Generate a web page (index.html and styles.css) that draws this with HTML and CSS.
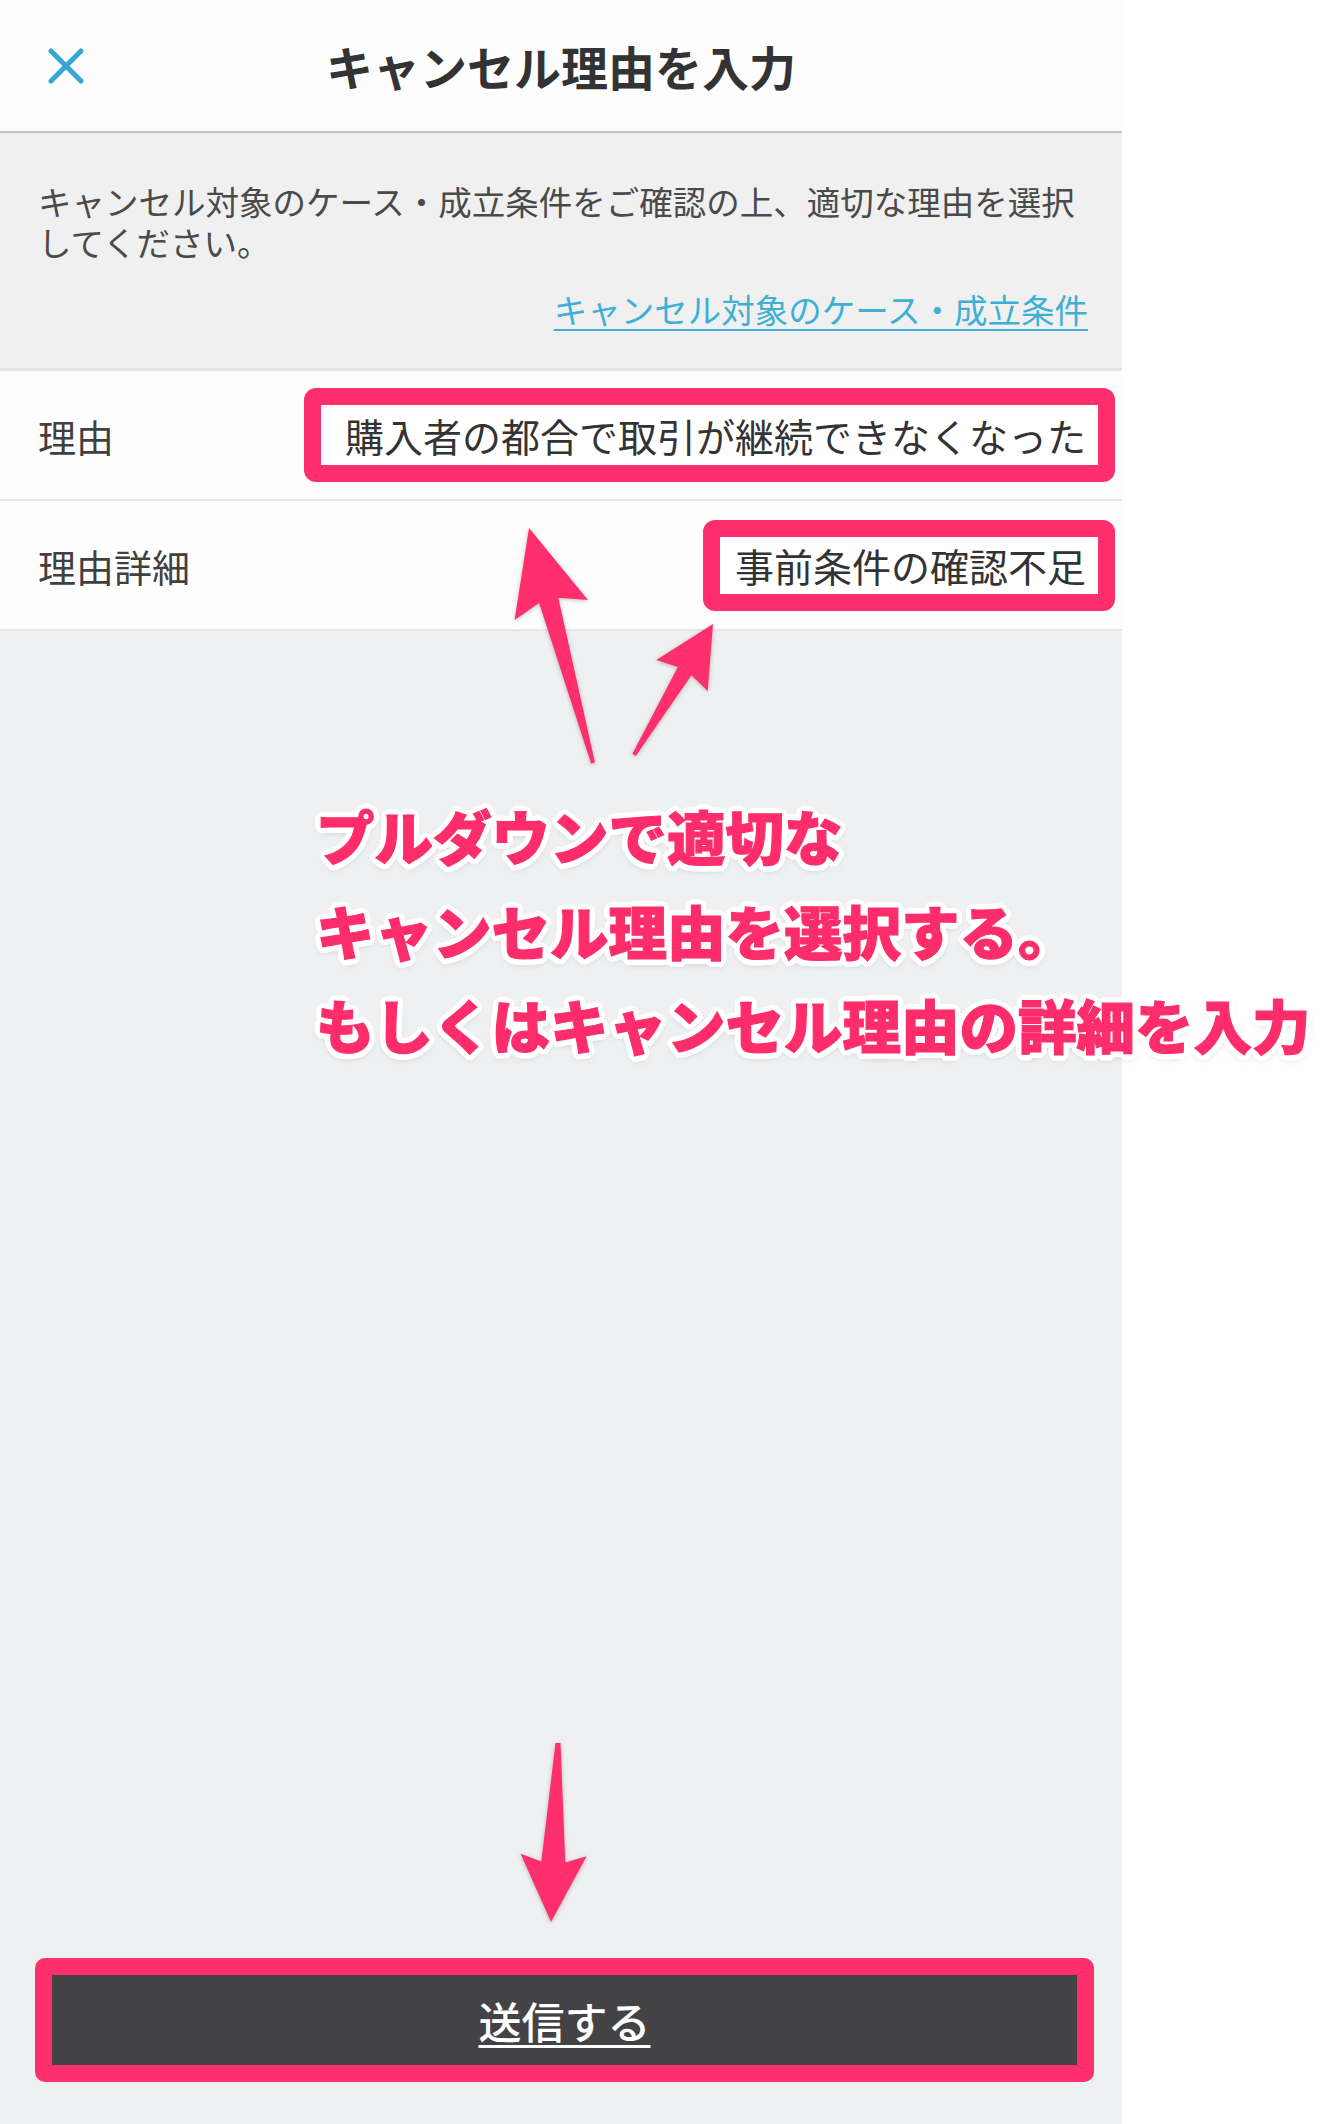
FILE: index.html
```html
<!DOCTYPE html>
<html lang="ja">
<head>
  <meta charset="UTF-8" />
  <meta name="viewport" content="width=device-width, initial-scale=1.0"/>
  <title>キャンセル理由を入力</title>
  <link rel="stylesheet" href="styles.css">
</head>
<body>
  <div class="screen">
    <!-- Top bar -->
    <header class="topbar">
      <button class="close" aria-label="閉じる">
        <svg width="36" height="36" viewBox="0 0 36 36">
          <path d="M3 3 L33 33 M33 3 L3 33" stroke="#35a7d7" stroke-width="5" stroke-linecap="round" fill="none"/>
        </svg>
      </button>
      <h1>キャンセル理由を入力</h1>
      <span></span>
    </header>

    <!-- Notice -->
    <section class="notice">
      <p>キャンセル対象のケース・成立条件をご確認の上、適切な理由を選択してください。</p>
      <a class="notice-link" href="#">キャンセル対象のケース・成立条件</a>
    </section>

    <!-- Fields -->
    <ul class="fields">
      <li class="field">
        <span class="field-label">理由</span>
        <span class="field-value mark mark-reason">購入者の都合で取引が継続できなくなった</span>
      </li>
      <li class="field">
        <span class="field-label">理由詳細</span>
        <span class="field-value mark mark-detail">事前条件の確認不足</span>
      </li>
    </ul>

    <div class="spacer"></div>

    <div class="submit-area">
      <div class="mark mark-button">
        <button class="submit" type="button">送信する</button>
      </div>
    </div>

    <!-- Annotation layer -->
    <svg class="arrows" width="1343" height="2124" viewBox="0 0 1343 2124">
      <polygon points="529,528 588,600 558.3,597.8 594.9,762.5 591.1,763.5 539.1,603 514.6,620"/>
      <polygon points="713,624 707.7,690.9 691.4,675.2 635.7,756 632.3,754 677.8,667 656.3,659.9"/>
      <polygon points="551,1922 586.6,1856.3 565.3,1862.5 560.5,1743.1 555.5,1742.9 541.3,1861.5 520.6,1853.7"/>
    </svg>
    <p class="callout">プルダウンで適切な<br>キャンセル理由を選択する。<br>もしくはキャンセル理由の詳細を入力</p>
  </div>
</body>
</html>
```

FILE: styles.css
```css
* {
  margin: 0;
  padding: 0;
  box-sizing: border-box;
}

body {
  font-family: "Noto Sans CJK JP", "Noto Sans", sans-serif;
  background: #fff;
  color: #333;
  overflow: hidden;
}

.screen {
  position: relative;
  width: 1122px;
  min-height: 100vh;
  background: #eff0f2;
  display: flex;
  flex-direction: column;
}

/* top bar */
.topbar {
  height: 133px;
  background: #fdfdfd;
  border-bottom: 2px solid #c3c3c5;
  display: grid;
  grid-template-columns: 1fr auto 1fr;
  align-items: center;
}

.close {
  justify-self: start;
  margin-left: 48px;
  background: none;
  border: none;
  width: 36px;
  height: 36px;
  display: flex;
}

.topbar h1 {
  font-size: 47px;
  font-weight: 700;
  color: #333;
  line-height: 1;
}

/* notice */
.notice {
  padding: 47px 34px 39px 38px;
  border-bottom: 3px solid #e5e5e7;
  background: #f0f0f1;
}

.notice p {
  font-size: 33.5px;
  line-height: 41px;
  color: #4a4a4a;
}

.notice-link {
  display: block;
  margin-top: 26px;
  text-align: right;
  font-size: 33.5px;
  line-height: 41px;
  color: #3fb0d4;
  text-decoration: underline;
  text-decoration-thickness: 2px;
  text-underline-offset: 6px;
}

/* fields */
.fields {
  list-style: none;
}

.field {
  height: 130px;
  display: flex;
  align-items: center;
  justify-content: space-between;
  padding: 0 34px 0 38px;
  background: #fdfdfd;
  border-bottom: 2px solid #e7e7e9;
}

.field-label {
  font-size: 38px;
  color: #404040;
}

.field-value {
  font-size: 39px;
  color: #333;
  white-space: nowrap;
}

/* pink highlight boxes */
.mark {
  border: 17px solid #ff2e6c;
  border-radius: 12px;
  background: #fff;
}

.mark-reason {
  line-height: 60px;
  padding: 0 12px 0 24px;
  margin-right: -27px;
}

.mark-detail {
  line-height: 57px;
  padding: 0 12px 0 15px;
  margin-right: -27px;
}

.spacer {
  flex: 1;
}

.submit-area {
  padding: 0 28px 42px 35px;
}

.mark-button {
  border-radius: 10px;
  background: #434345;
}

.submit {
  display: block;
  width: 100%;
  height: 90px;
  border: none;
  background: #434345;
  color: #fff;
  font: inherit;
  font-size: 43px;
  font-weight: 500;
  text-decoration: underline;
  text-decoration-thickness: 3px;
  text-underline-offset: 6px;
}

/* annotations */
.arrows {
  position: absolute;
  left: 0;
  top: 0;
  pointer-events: none;
  overflow: visible;
  fill: #ff2e6c;
  filter: drop-shadow(0 1px 2px rgba(0,0,0,0.25));
}

.callout {
  position: absolute;
  left: 316px;
  top: 788px;
  font-size: 58.5px;
  line-height: 94.5px;
  font-weight: 900;
  color: #fd2d6b;
  -webkit-text-stroke: 1.2px #fd2d6b;
  white-space: nowrap;
  text-shadow:
    6px 0 0 #fff, -6px 0 0 #fff, 0 6px 0 #fff, 0 -6px 0 #fff,
    4.2px 4.2px 0 #fff, -4.2px 4.2px 0 #fff, 4.2px -4.2px 0 #fff, -4.2px -4.2px 0 #fff,
    5.5px 2.3px 0 #fff, -5.5px 2.3px 0 #fff, 5.5px -2.3px 0 #fff, -5.5px -2.3px 0 #fff,
    2.3px 5.5px 0 #fff, -2.3px 5.5px 0 #fff, 2.3px -5.5px 0 #fff, -2.3px -5.5px 0 #fff,
    0 3px 8px rgba(0,0,0,0.35);
}
```
